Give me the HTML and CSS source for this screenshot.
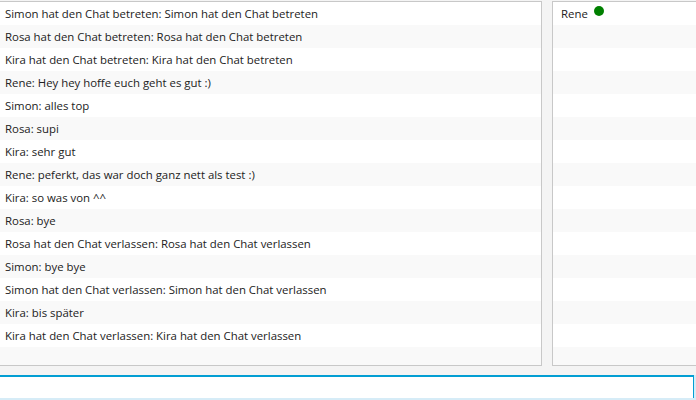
FILE: index.html
```html
<!DOCTYPE html>
<html>
<head>
<meta charset="utf-8">
<link rel="stylesheet" href="styles.css">
</head>
<body>
<div class="app">
  <div class="lists">
    <div class="list chat">
      <div class="row">Simon hat den Chat betreten: Simon hat den Chat betreten</div>
      <div class="row">Rosa hat den Chat betreten: Rosa hat den Chat betreten</div>
      <div class="row">Kira hat den Chat betreten: Kira hat den Chat betreten</div>
      <div class="row">Rene: Hey hey hoffe euch geht es gut :)</div>
      <div class="row">Simon: alles top</div>
      <div class="row">Rosa: supi</div>
      <div class="row">Kira: sehr gut</div>
      <div class="row">Rene: peferkt, das war doch ganz nett als test :)</div>
      <div class="row">Kira: so was von ^^</div>
      <div class="row">Rosa: bye</div>
      <div class="row">Rosa hat den Chat verlassen: Rosa hat den Chat verlassen</div>
      <div class="row">Simon: bye bye</div>
      <div class="row">Simon hat den Chat verlassen: Simon hat den Chat verlassen</div>
      <div class="row">Kira: bis später</div>
      <div class="row">Kira hat den Chat verlassen: Kira hat den Chat verlassen</div>
      <div class="row"></div>
    </div>
    <div class="list users">
      <div class="row user"><span class="name">Rene</span><span class="dot"></span></div>
      <div class="row"></div><div class="row"></div><div class="row"></div>
      <div class="row"></div><div class="row"></div><div class="row"></div>
      <div class="row"></div><div class="row"></div><div class="row"></div>
      <div class="row"></div><div class="row"></div><div class="row"></div>
      <div class="row"></div><div class="row"></div><div class="row"></div>
    </div>
  </div>
  <div class="input-wrap"><div class="input"></div></div>
</div>
</body>
</html>
```
FILE: styles.css
```css
html, body {
  margin: 0;
  padding: 0;
  background: #f4f4f4;
  overflow: hidden;
  width: 696px;
  height: 400px;
}
.app {
  padding-top: 1px;
  font-family: "Open Sans", "Noto Sans", sans-serif;
  font-size: 11.4px;
  color: #222;
}
.lists {
  display: flex;
  gap: 10px;
  height: 365px;
  margin-left: -1px;
  margin-right: -1px;
}
.list {
  border: 1px solid #c8c8c8;
  background: #ffffff;
  overflow: hidden;
  box-sizing: border-box;
  height: 365px;
}
.chat {
  width: 543px;
}
.users {
  flex: 1;
}
.row {
  height: 23px;
  line-height: 23px;
  padding-left: 5px;
  white-space: nowrap;
  background: #ffffff;
}
.row:nth-child(even) {
  background: #f9f9f9;
}
.users .row {
  padding-left: 8px;
}
.user {
  display: flex;
  align-items: flex-start;
}
.name {
  line-height: 23px;
}
.dot {
  width: 10px;
  height: 10px;
  border-radius: 50%;
  background: #008000;
  margin-left: 6px;
  margin-top: 4px;
}
.input-wrap {
  margin-top: 9px;
  margin-left: -3px;
  margin-right: 0;
  width: 699px;
  background: #d6ecf7;
  padding: 0 2px 2px 0;
  box-sizing: border-box;
}
.input {
  height: 21px;
  background: #ffffff;
  border-top: 2px solid #039ed3;
  border-left: 1px solid #039ed3;
  border-right: 1px solid #039ed3;
}
```
